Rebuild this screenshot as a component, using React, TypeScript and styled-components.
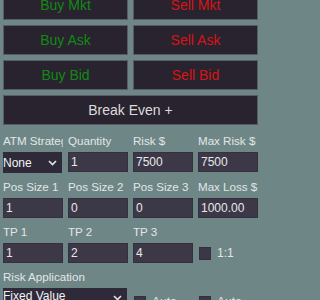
import React from "react";
import styled, { createGlobalStyle } from "styled-components";

const GlobalStyle = createGlobalStyle`
  html, body {
    margin: 0;
    padding: 0;
    background: #6e8686;
    overflow: hidden;
  }
  body {
    font-family: "Liberation Sans", Arial, sans-serif;
  }
`;

const Panel = styled.div`
  width: 255px;
  padding: 0 3px;
  margin-top: -10px;
  display: flex;
  flex-direction: column;
  gap: 9px;
`;

const ButtonGrid = styled.div`
  display: grid;
  grid-template-columns: repeat(2, 1fr);
  grid-auto-rows: 30px;
  column-gap: 5px;
  row-gap: 5px;
`;

const ActionButton = styled.button<{ $tone: "buy" | "sell" | "neutral"; $wide?: boolean }>`
  box-sizing: border-box;
  grid-column: ${(p) => (p.$wide ? "1 / span 2" : "auto")};
  margin: 0;
  padding: 0;
  background: #28232f;
  border: 1px solid #565b69;
  font-family: "Liberation Sans", Arial, sans-serif;
  font-size: 14px;
  color: ${(p) =>
    p.$tone === "buy" ? "#128a12" : p.$tone === "sell" ? "#d81414" : "#dcdcdc"};
  display: flex;
  align-items: center;
  justify-content: center;
`;

const FieldGrid = styled.div`
  display: grid;
  grid-template-columns: repeat(4, 60px);
  column-gap: 5px;
  row-gap: 7px;
`;

const Field = styled.div<{ $span?: number }>`
  display: flex;
  flex-direction: column;
  gap: 4px;
  min-width: 0;
  grid-column: span ${(p) => p.$span ?? 1};
`;

const Label = styled.div`
  height: 14px;
  line-height: 14px;
  font-size: 11.6px;
  color: #e2e6e6;
  white-space: nowrap;
  overflow: hidden;
`;

const TextBox = styled.input`
  box-sizing: border-box;
  width: 100%;
  height: 20px;
  margin: 0;
  padding: 0 2px;
  background: #3c3848;
  border: 1px solid #34303f;
  color: #e8e8e8;
  font-family: "Liberation Sans", Arial, sans-serif;
  font-size: 12px;
  outline: none;
`;

const Combo = styled.div<{ $wide?: boolean }>`
  box-sizing: border-box;
  height: 21px;
  width: ${(p) => (p.$wide ? "124px" : "59px")};
  padding: ${(p) => (p.$wide ? "1px 5px 0 0" : "0 5px 0 0")};
  background: #2e2a39;
  color: #f4f4f4;
  font-size: 12px;
  display: flex;
  align-items: ${(p) => (p.$wide ? "flex-start" : "center")};
  justify-content: space-between;

  svg {
    margin-top: ${(p) => (p.$wide ? "6px" : "0")};
  }
`;

const ComboText = styled.span`
  white-space: nowrap;
  line-height: 14px;
`;

const CheckRow = styled.div<{ $offset?: number }>`
  height: 20px;
  display: flex;
  align-items: center;
  gap: 6px;
  padding-left: 1px;
  margin-top: ${(p) => p.$offset ?? 0}px;
  font-size: 12px;
  color: #e2e6e6;
`;

const CheckBox = styled.span`
  box-sizing: border-box;
  width: 12px;
  height: 13px;
  background: #3b3747;
  border: 1px solid #34303f;
  flex: none;
`;

const Chevron = () => (
  <svg width="9" height="6" viewBox="0 0 9 6">
    <path d="M1 1 L4.5 4.5 L8 1" fill="none" stroke="#e4e4e4" strokeWidth="1.6" />
  </svg>
);

export default function App() {
  return (
    <>
      <GlobalStyle />
      <Panel>
        <ButtonGrid>
          <ActionButton $tone="buy">Buy Mkt</ActionButton>
          <ActionButton $tone="sell">Sell Mkt</ActionButton>
          <ActionButton $tone="buy">Buy Ask</ActionButton>
          <ActionButton $tone="sell">Sell Ask</ActionButton>
          <ActionButton $tone="buy">Buy Bid</ActionButton>
          <ActionButton $tone="sell">Sell Bid</ActionButton>
          <ActionButton $tone="neutral" $wide>
            Break Even +
          </ActionButton>
        </ButtonGrid>
        <FieldGrid>
          <Field>
            <Label>ATM Strategy</Label>
            <Combo>
              <ComboText>None</ComboText>
              <Chevron />
            </Combo>
          </Field>
          <Field>
            <Label>Quantity</Label>
            <TextBox defaultValue="1" />
          </Field>
          <Field>
            <Label>Risk $</Label>
            <TextBox defaultValue="7500" />
          </Field>
          <Field>
            <Label>Max Risk $</Label>
            <TextBox defaultValue="7500" />
          </Field>

          <Field>
            <Label>Pos Size 1</Label>
            <TextBox defaultValue="1" />
          </Field>
          <Field>
            <Label>Pos Size 2</Label>
            <TextBox defaultValue="0" />
          </Field>
          <Field>
            <Label>Pos Size 3</Label>
            <TextBox defaultValue="0" />
          </Field>
          <Field>
            <Label>Max Loss $</Label>
            <TextBox defaultValue="1000.00" />
          </Field>

          <Field>
            <Label>TP 1</Label>
            <TextBox defaultValue="1" />
          </Field>
          <Field>
            <Label>TP 2</Label>
            <TextBox defaultValue="2" />
          </Field>
          <Field>
            <Label>TP 3</Label>
            <TextBox defaultValue="4" />
          </Field>
          <Field>
            <Label />
            <CheckRow>
              <CheckBox />
              1:1
            </CheckRow>
          </Field>

          <Field $span={2}>
            <Label>Risk Application</Label>
            <Combo $wide>
              <ComboText>Fixed Value</ComboText>
              <Chevron />
            </Combo>
          </Field>
          <Field>
            <Label />
            <CheckRow $offset={4}>
              <CheckBox />
              Auto
            </CheckRow>
          </Field>
          <Field>
            <Label />
            <CheckRow $offset={4}>
              <CheckBox />
              Auto
            </CheckRow>
          </Field>
        </FieldGrid>
      </Panel>
    </>
  );
}
